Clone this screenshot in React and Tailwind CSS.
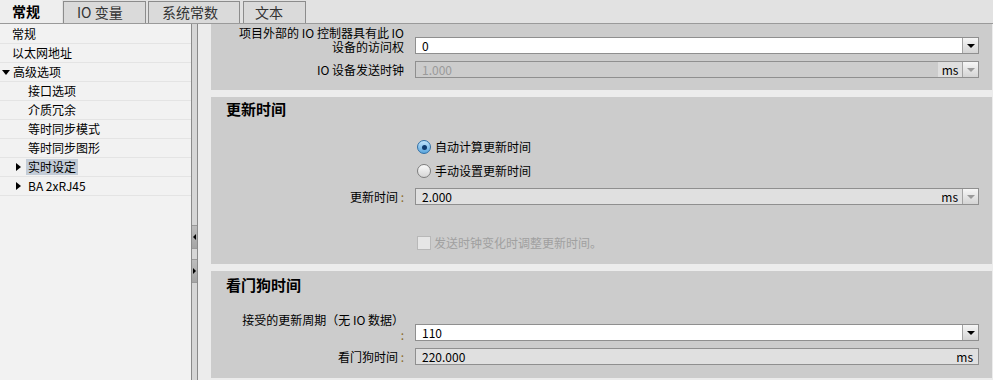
import React from 'react'

// ── small drawing helpers ─────────────────────────────────────────────────────
function DownTri({ dim }) {
  return (
    <span
      className={`block h-0 w-0 border-x-[4px] border-t-[4px] border-x-transparent ${dim ? 'border-t-[#9a9a9a]' : 'border-t-black'}`}
    />
  )
}

function DropBtn({ dim }) {
  return (
    <div className="flex h-full w-[16px] shrink-0 items-center justify-center border-l border-[#a3a3a3] bg-gradient-to-b from-[#f6f6f6] to-[#d4d4d4]">
      <DownTri dim={dim} />
    </div>
  )
}

function Label({ children, className = '' }) {
  return (
    <div className={`ml-[25px] w-[168px] shrink-0 text-right text-[12px] text-black ${className}`}>
      {children}
    </div>
  )
}

function Radio({ checked, children }) {
  return (
    <div className="ml-[206px] flex h-[20px] items-center gap-[4px] text-[12px] leading-[20px] text-black">
      {checked ? (
        <span className="flex h-[14px] w-[14px] items-center justify-center rounded-full border border-[#2f6fa6] bg-gradient-to-b from-[#bfe3fb] to-[#5aa6dd]">
          <span className="h-[5px] w-[5px] rounded-full bg-[#0e3a6e]" />
        </span>
      ) : (
        <span className="h-[14px] w-[14px] rounded-full border border-[#7d7d7d] bg-gradient-to-b from-[#fafafa] to-[#d6d6d6]" />
      )}
      <span>{children}</span>
    </div>
  )
}

const tree = [
  { text: '常规', indent: 'pl-[12px]' },
  { text: '以太网地址', indent: 'pl-[12px]' },
  { text: '高级选项', indent: 'pl-[2px]', open: true },
  { text: '接口选项', indent: 'pl-[28px]' },
  { text: '介质冗余', indent: 'pl-[28px]' },
  { text: '等时同步模式', indent: 'pl-[28px]' },
  { text: '等时同步图形', indent: 'pl-[28px]' },
  { text: '实时设定', indent: 'pl-[16px]', closed: true, selected: true },
  { text: 'BA 2xRJ45', indent: 'pl-[16px]', closed: true },
]

export default function App() {
  return (
    <div className="flex h-[380px] w-[993px] flex-col overflow-hidden bg-[#ececec] font-['Noto_Sans_CJK_SC','Liberation_Sans',sans-serif]">
      {/* Tabs */}
      <div className="flex h-[24px] shrink-0 items-end border-b border-[#9a9a9a] bg-[#e2e2e2]">
        <div className="flex h-[23px] w-[62px] items-center bg-[#eeeeee] pl-[12px] text-[14px] font-bold text-black">常规</div>
        <div className="ml-[1px] flex h-[22px] w-[83px] items-center border border-b-0 border-[#8c8c8c] bg-[#dadada] pl-[13px] text-[14px] text-[#333]">IO 变量</div>
        <div className="ml-[2px] flex h-[22px] w-[92px] items-center border border-b-0 border-[#8c8c8c] bg-[#dadada] pl-[13px] text-[14px] text-[#333]">系统常数</div>
        <div className="ml-[3px] flex h-[22px] w-[63px] items-center border border-b-0 border-[#8c8c8c] bg-[#dadada] pl-[11px] text-[14px] text-[#333]">文本</div>
      </div>

      <div className="flex min-h-0 flex-1">
        {/* Navigation tree */}
        <div className="w-[191px] shrink-0 bg-[#f2f2f2] pt-[1px]">
          {tree.map((n) => (
            <div key={n.text} className={`flex h-[19px] items-center border-b border-[#e4e4e4] text-[12px] text-black ${n.indent}`}>
              {n.open && <span className="mr-[3px] h-0 w-0 border-x-[4px] border-t-[5px] border-x-transparent border-t-black" />}
              {n.closed && <span className="mr-[5px] h-0 w-0 border-y-[4px] border-l-[5px] border-y-transparent border-l-black" />}
              <span className={`leading-[16px] ${n.selected ? 'bg-[#c3ccd7] px-[2px]' : n.closed ? 'pl-[2px]' : ''}`}>{n.text}</span>
            </div>
          ))}
        </div>

        {/* Splitter */}
        <div className="flex w-[7px] shrink-0 flex-col border-x border-[#8a8a8a] bg-[#d6d6d6]">
          <div className="mt-[201px] flex h-[24px] items-center border-y border-[#9a9a9a] bg-gradient-to-b from-[#bdbdbd] to-[#a5a5a5] pl-[1px]">
            <span className="h-0 w-0 border-y-[3px] border-r-[3px] border-y-transparent border-r-black" />
          </div>
          <div className="mt-[10px] flex h-[24px] items-center border-y border-[#9a9a9a] bg-gradient-to-b from-[#bdbdbd] to-[#a5a5a5] pl-[1px]">
            <span className="h-0 w-0 border-y-[3px] border-l-[3px] border-y-transparent border-l-black" />
          </div>
        </div>
        <div className="w-[13px] shrink-0 bg-[#ececec]" />

        {/* Property sections */}
        <div className="flex w-[781px] shrink-0 flex-col">
          {/* Section 1 (scrolled) */}
          <div className="h-[66px] shrink-0 bg-[#cccccc] pt-[2px]">
            <div className="flex h-[28px] items-end">
              <Label className="leading-[14px]">
                项目外部的 IO 控制器具有此 IO<br />设备的访问权
              </Label>
              <div className="ml-[11px] mr-[13px] flex h-[17px] flex-1 items-center border border-[#8f8f8f] bg-white">
                <span className="flex-1 pl-[6px] text-[12px] leading-[15px] text-black">0</span>
                <DropBtn />
              </div>
            </div>
            <div className="mt-[7px] flex h-[17px] items-center">
              <Label className="leading-[17px]">IO 设备发送时钟</Label>
              <div className="ml-[11px] mr-[13px] flex h-[17px] flex-1 items-center border border-[#8f8f8f] bg-[#cccccc]">
                <span className="flex-1 pl-[6px] text-[12px] leading-[15px] text-[#9a9a9a]">1.000</span>
                <span className="flex h-full w-[24px] items-center justify-center bg-[#dfdfdf] text-[12px] leading-[15px] text-black">ms</span>
                <DropBtn dim />
              </div>
            </div>
          </div>

          <div className="h-[7px] shrink-0" />

          {/* 更新时间 */}
          <div className="h-[167px] shrink-0 bg-[#cccccc] pt-[2px]">
            <div className="pl-[15px] text-[15px] font-bold leading-[20px] text-black">更新时间</div>
            <div className="mt-[18px]">
              <Radio checked>自动计算更新时间</Radio>
            </div>
            <div className="mt-[4px]">
              <Radio>手动设置更新时间</Radio>
            </div>
            <div className="mt-[7px] flex h-[17px] items-center">
              <Label className="leading-[17px]">
                更新时间 <span className="text-[#8a6a2a]">:</span>
              </Label>
              <div className="ml-[11px] mr-[13px] flex h-[17px] flex-1 items-center border border-[#8f8f8f] bg-[#e0e0e0]">
                <span className="flex-1 pl-[6px] text-[12px] leading-[15px] text-black">2.000</span>
                <span className="pr-[4px] text-[12px] leading-[15px] text-black">ms</span>
                <DropBtn dim />
              </div>
            </div>
            <div className="ml-[206px] mt-[28px] flex h-[20px] items-center gap-[3px] text-[12px] leading-[20px] text-[#a0a0a0]">
              <span className="h-[14px] w-[14px] border border-[#b8b8b8] bg-[#e6e6e6]" />
              <span>发送时钟变化时调整更新时间。</span>
            </div>
          </div>

          <div className="h-[7px] shrink-0" />

          {/* 看门狗时间 */}
          <div className="h-[107px] shrink-0 bg-[#cccccc] pt-[4px]">
            <div className="pl-[15px] text-[15px] font-bold leading-[20px] text-black">看门狗时间</div>
            <div className="mt-[18px] flex h-[29px] items-end">
              <Label className="leading-[15px]">
                接受的更新周期（无 IO 数据）<br /><span className="text-[#8a6a2a]">:</span>
              </Label>
              <div className="mb-[1px] ml-[11px] mr-[13px] flex h-[17px] flex-1 items-center border border-[#8f8f8f] bg-white">
                <span className="flex-1 pl-[6px] text-[12px] leading-[15px] text-black">110</span>
                <DropBtn />
              </div>
            </div>
            <div className="mt-[6px] flex h-[17px] items-center">
              <Label className="leading-[17px]">
                看门狗时间 <span className="text-[#8a6a2a]">:</span>
              </Label>
              <div className="ml-[11px] mr-[13px] flex h-[17px] flex-1 items-center border border-[#8f8f8f] bg-[#e0e0e0]">
                <span className="flex-1 pl-[6px] text-[12px] leading-[15px] text-black">220.000</span>
                <span className="pr-[5px] text-[12px] leading-[15px] text-black">ms</span>
              </div>
            </div>
          </div>
        </div>
      </div>
    </div>
  )
}
